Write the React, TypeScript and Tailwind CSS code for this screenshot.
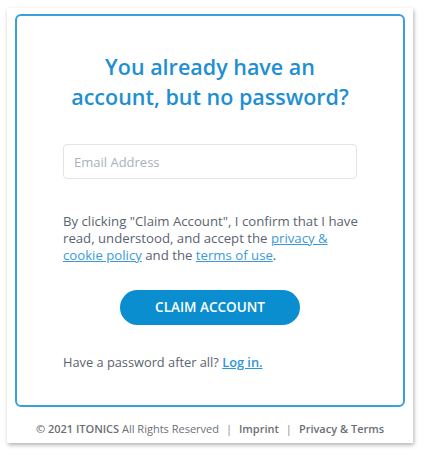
import React from 'react';

const App = () => {
  return (
    <div className="min-h-[456px] bg-white pt-[8px] pl-[7px]" style={{ fontFamily: '"Open Sans", Arial, sans-serif' }}>
      <div className="w-[406px] bg-white px-[8px] pt-[6px] shadow-[1px_2px_4px_rgba(0,0,0,0.3)]">
        <div className="flex flex-col rounded-[6px] border-2 border-[#3a9fdc] px-[46px] pb-[34px] pt-[36px]">
          <h1 className="text-center text-[21.5px] font-semibold leading-[30px] text-[#1f8fd3]">
            You already have an
            <br />
            account, but no password?
          </h1>
          <input
            type="email"
            placeholder="Email Address"
            className="mt-[32px] h-[35px] w-full rounded-[4px] border border-[#e1e4e8] px-[10px] text-[13px] text-[#444] outline-none placeholder:text-[#a9b1bd]"
          />
          <p className="-mr-[6px] mt-[34px] text-[13.2px] leading-[17px] text-[#5b6370]">
            By clicking "Claim Account", I confirm that I have read, understood, and accept the{' '}
            <a href="#" className="text-[#3a9ad9] underline">privacy &amp; cookie policy</a> and the{' '}
            <a href="#" className="text-[#3a9ad9] underline">terms of use</a>.
          </p>
          <button className="mx-auto mt-[26px] h-[35px] w-[180px] rounded-full bg-[#0b8ed0] text-[13.5px] font-semibold text-white">
            CLAIM ACCOUNT
          </button>
          <p className="mt-[28px] text-[12.8px] leading-[18px] text-[#5b6370]">
            Have a password after all?{' '}
            <a href="#" className="font-semibold text-[#2f95d6] underline">Log in.</a>
          </p>
        </div>
        <div className="pb-[6px] pt-[14px] text-center text-[11px] leading-[16px] text-[#6b6f75]">
          <span className="font-semibold">© 2021 ITONICS</span> All Rights Reserved
          <span className="mx-[7px] text-[#888]">|</span>
          <a href="#" className="font-semibold">Imprint</a>
          <span className="mx-[7px] text-[#888]">|</span>
          <a href="#" className="font-semibold">Privacy &amp; Terms</a>
        </div>
      </div>
    </div>
  );
};

export default App;
